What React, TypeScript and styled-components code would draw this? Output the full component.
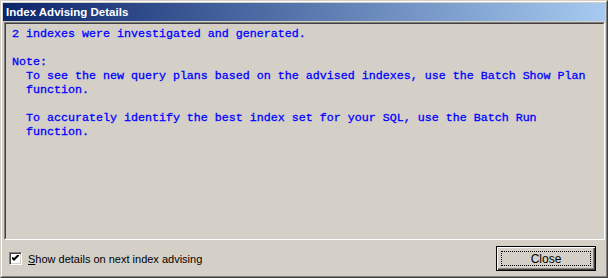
import React from "react";
import styled, { createGlobalStyle } from "styled-components";

const Global = createGlobalStyle`
  html, body { margin: 0; padding: 0; background: #d4d0c8; }
  body { width: 608px; height: 278px; overflow: hidden; }
`;

const Window = styled.div`
  box-sizing: border-box;
  width: 608px;
  height: 278px;
  background: #d4d0c8;
  border-top: 1px solid #d4d0c8;
  border-left: 1px solid #d4d0c8;
  border-right: 1px solid #404040;
  border-bottom: 1px solid #404040;
  display: flex;
`;

const Inner = styled.div`
  box-sizing: border-box;
  flex: 1;
  border-top: 1px solid #ffffff;
  border-left: 1px solid #ffffff;
  border-right: 1px solid #808080;
  border-bottom: 1px solid #808080;
  padding: 1px;
  display: flex;
  flex-direction: column;
`;

const TitleBar = styled.div`
  height: 18px;
  background: linear-gradient(to right, #0a246a, #a6caf0);
  color: #ffffff;
  font-family: "Liberation Sans", Arial, sans-serif;
  font-weight: bold;
  font-size: 11.5px;
  line-height: 18px;
  padding-left: 3px;
`;

const Panel = styled.div`
  box-sizing: border-box;
  margin: 1px 0 0 1px;
  height: 218px;
  border-top: 1px solid #808080;
  border-left: 1px solid #808080;
  border-right: 1px solid #ffffff;
  border-bottom: 1px solid #ffffff;
  display: flex;
`;

const PanelInner = styled.div`
  flex: 1;
  border-top: 1px solid #404040;
  border-left: 1px solid #404040;
  border-right: 1px solid #d4d0c8;
  border-bottom: 1px solid #d4d0c8;
  padding: 3px 0 0 6px;
`;

const Message = styled.pre`
  margin: 0;
  font-family: "Liberation Mono", "Courier New", monospace;
  font-size: 11.67px;
  line-height: 14px;
  color: #0000ff;
  -webkit-text-stroke: 0.3px #0000ff;
`;

const Footer = styled.div`
  flex: 1;
  display: flex;
  align-items: center;
  justify-content: space-between;
  padding: 0 9px 0 6px;
`;

const CheckRow = styled.label`
  display: flex;
  align-items: center;
  gap: 6px;
  font-family: "Liberation Sans", Arial, sans-serif;
  font-size: 11px;
  color: #000000;
  margin-top: 2px;
`;

const Box = styled.span`
  box-sizing: border-box;
  width: 13px;
  height: 13px;
  background: #ffffff;
  border-top: 1px solid #808080;
  border-left: 1px solid #808080;
  border-right: 1px solid #ffffff;
  border-bottom: 1px solid #ffffff;
  box-shadow: inset 1px 1px 0 #404040, inset -1px -1px 0 #d4d0c8;
  display: flex;
  align-items: center;
  justify-content: center;
`;

const Underline = styled.span`
  text-decoration: underline;
`;

const Button = styled.button`
  box-sizing: border-box;
  width: 100px;
  height: 25px;
  margin-top: 2px;
  background: #d4d0c8;
  border: 1px solid #000000;
  padding: 0;
  font-family: "Liberation Sans", Arial, sans-serif;
  font-size: 12px;
  color: #000000;
  display: flex;
  box-shadow: inset 1px 1px 0 #ffffff, inset -1px -1px 0 #404040, inset -2px -2px 0 #808080;
`;

const Focus = styled.span`
  flex: 1;
  margin: 4px;
  border: 1px dotted #000000;
  display: flex;
  align-items: center;
  justify-content: center;
`;

const text = `2 indexes were investigated and generated.

Note:
  To see the new query plans based on the advised indexes, use the Batch Show Plan
  function.

  To accurately identify the best index set for your SQL, use the Batch Run
  function.`;

export default function App() {
  return (
    <>
      <Global />
      <Window>
        <Inner>
          <TitleBar>Index Advising Details</TitleBar>
          <Panel>
            <PanelInner>
              <Message>{text}</Message>
            </PanelInner>
          </Panel>
          <Footer>
            <CheckRow>
              <Box>
                <svg width="7" height="7" viewBox="0 0 7 7">
                  <path d="M0 2.5 L2 4.5 L7 -0.5" stroke="#000" strokeWidth="2" fill="none" />
                </svg>
              </Box>
              <span>
                <Underline>S</Underline>how details on next index advising
              </span>
            </CheckRow>
            <Button>
              <Focus>Close</Focus>
            </Button>
          </Footer>
        </Inner>
      </Window>
    </>
  );
}
